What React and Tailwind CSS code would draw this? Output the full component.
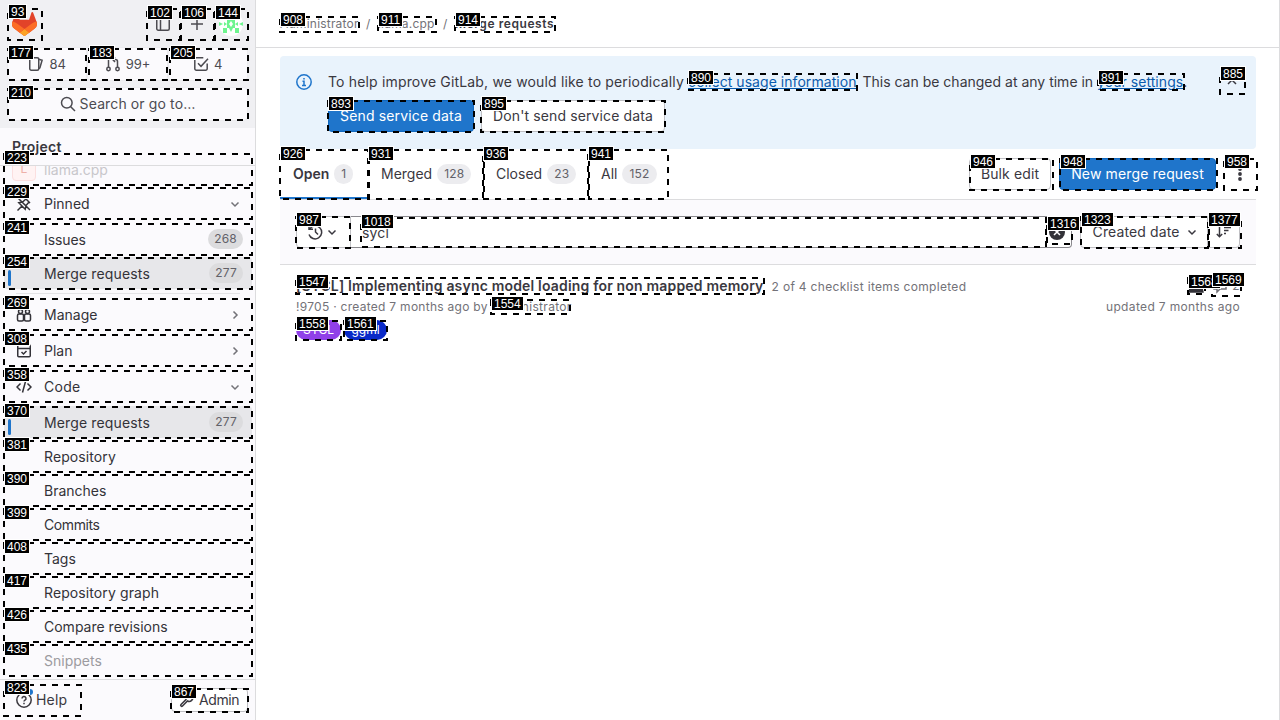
import React from "react";

const MARKS = [
  ["93", 7, 8, 36, 33, 9, 5], ["102", 146, 8, 35, 33, 148, 6], ["106", 180, 8, 35, 33, 182, 6], ["144", 214, 8, 35, 33, 216, 6],
  ["177", 7, 48, 80, 33], ["183", 88, 48, 80, 33, 90, 46], ["205", 169, 48, 80, 33, 171, 46], ["210", 7, 88, 242, 33],
  ["223", 3, 153, 250, 33, 5, 151], ["229", 3, 187, 250, 33, 5, 185], ["241", 3, 223, 250, 33, 5, 221], ["254", 3, 257, 250, 33, 5, 255],
  ["269", 3, 298, 250, 33], ["308", 3, 334, 250, 33], ["358", 3, 370, 250, 33], ["370", 3, 406, 250, 33],
  ["381", 3, 440, 250, 33], ["390", 3, 474, 250, 33], ["399", 3, 508, 250, 33], ["408", 3, 542, 250, 33],
  ["417", 3, 576, 250, 33], ["426", 3, 610, 250, 33], ["435", 3, 644, 250, 33],
  ["823", 3, 684, 79, 33, 5, 681], ["867", 170, 688, 79, 25, 172, 685],
  ["908", 279, 16, 81, 17, 281, 13], ["911", 377, 16, 60, 17, 379, 13], ["914", 454, 16, 102, 17, 456, 13],
  ["890", 687, 73, 171, 18, 689, 71], ["891", 1097, 73, 88, 18, 1099, 71], ["885", 1219, 70, 27, 25, 1221, 67],
  ["893", 327, 100, 148, 33, 329, 97], ["895", 480, 100, 186, 33, 482, 97],
  ["926", 279, 149, 90, 51, 281, 147], ["931", 368, 149, 116, 51, 369, 147], ["936", 483, 149, 106, 51, 484, 147], ["941", 588, 149, 81, 51, 589, 147],
  ["946", 969, 158, 85, 33, 971, 155], ["948", 1059, 158, 159, 33, 1061, 155], ["958", 1223, 158, 35, 33, 1225, 155],
  ["987", 295, 216, 56, 33, 297, 213], ["1018", 360, 217, 687, 31, 362, 215], ["1316", 1046, 222, 27, 23, 1048, 217],
  ["1323", 1080, 216, 129, 33, 1082, 213], ["1377", 1208, 216, 34, 33, 1209, 213],
  ["1547", 295, 277, 470, 18, 297, 275], ["1554", 490, 299, 81, 16, 492, 297],
  ["1558", 295, 320, 47, 21, 297, 317], ["1561", 343, 320, 45, 21, 345, 317],
  ["1568", 1187, 277, 19, 18, 1189, 275], ["1569", 1211, 277, 31, 20, 1213, 273],
];

function Marks() {
  return (
    <div className="pointer-events-none absolute inset-0 overflow-hidden">
      {MARKS.map(([id, x, y, w, h]) => (
        <svg key={id} className="absolute" style={{ left: x, top: y }} width={w} height={h} fill="none" stroke="#000" strokeWidth="2">
          <rect x="1" y="1" width={w - 2} height={h - 2} strokeDasharray="6 6" />
        </svg>
      ))}
      {MARKS.map(([id, x, y, w, h, lx = x + 2, ly = y - 2]) => (
        <span
          key={id}
          style={{ left: lx, top: ly }}
          className="absolute flex h-[13px] items-center bg-black px-[2px] text-[12px] leading-none tracking-[0px] text-white outline outline-white [font-family:'Liberation_Sans',sans-serif]"
        >
          {id}
        </span>
      ))}
    </div>
  );
}

function Icon({ children, className = "" }) {
  return (
    <svg viewBox="0 0 16 16" width="16" height="16" fill="none" stroke="currentColor" strokeWidth="1.5" className={"shrink-0 " + className}>
      {children}
    </svg>
  );
}

const ChevronDown = ({ className }) => <Icon className={className}><path d="m4.500 6.500 3.500 3.500 3.500-3.500" /></Icon>;
const ChevronRight = ({ className }) => <Icon className={className}><path d="m6.500 4.500 3.500 3.500-3.500 3.500" /></Icon>;

function Badge({ children, className = "px-[6px]" }) {
  return (
    <span className={"flex h-5 items-center rounded-full text-[12px] tracking-[0.2px] text-[#626168] " + className}>{children}</span>
  );
}

function NavRow({ label, icon, count, chevron, active, className = "", labelClass = "" }) {
  return (
    <div className={"flex h-8 shrink-0 items-center rounded pr-[9px] pl-3 " + (active ? "bg-[#e7e7ea] " : "") + className}>
      <span className="flex w-7 items-center pt-px">
        {active ? <i className="-ml-2 mt-2 h-4 w-[3px] rounded bg-[#1f75cb]" /> : icon}
      </span>
      <span className={"grow pt-[2px] " + labelClass}>{label}</span>
      {count && <Badge className="bg-[#dcdcde] px-[6px]">{count}</Badge>}
      {chevron === "down" && <ChevronDown className="mt-px text-[#737278]" />}
      {chevron === "right" && <ChevronRight className="mt-px text-[#737278]" />}
    </div>
  );
}

function GitLabLogo() {
  return (
    <svg width="25" height="24" viewBox="0 0 25 24" className="shrink-0">
      <path d="m24.507 9.5-.034-.09L21.082.562a.896.896 0 0 0-1.694.091l-2.29 7.01H7.825L5.535.653a.898.898 0 0 0-1.694-.09L.451 9.411.416 9.5a6.297 6.297 0 0 0 2.09 7.278l.012.01.03.022 5.16 3.867 2.56 1.935 1.554 1.176a1.051 1.051 0 0 0 1.268 0l1.555-1.176 2.56-1.935 5.197-3.89.014-.01A6.297 6.297 0 0 0 24.507 9.5Z" fill="#E24329" />
      <path d="m24.507 9.5-.034-.09a11.44 11.44 0 0 0-4.56 2.051l-7.447 5.632 4.742 3.584 5.197-3.89.014-.01A6.297 6.297 0 0 0 24.507 9.5Z" fill="#FC6D26" />
      <path d="m7.707 20.677 2.56 1.935 1.555 1.176a1.051 1.051 0 0 0 1.268 0l1.555-1.176 2.56-1.935-4.743-3.584-4.755 3.584Z" fill="#FCA326" />
      <path d="M5.01 11.461a11.43 11.43 0 0 0-4.56-2.05L.416 9.5a6.297 6.297 0 0 0 2.09 7.278l.012.01.03.022 5.16 3.867 4.745-3.584-7.444-5.632Z" fill="#FC6D26" />
    </svg>
  );
}

function Avatar() {
  return (
    <svg width="24" height="24" viewBox="0 0 24 24" className="rounded-full bg-white" fill="#6ef58f">
      <path d="M8 8h8v8H8zM4 8h4V4zM20 8h-4V4zM4 16h4v5H4zM20 16h-4v5h4zM0 10l4 2-4 2zM24 10l-4 2 4 2zM10 16h4l-2 4zM5 10l3 2-3 2zM19 10l-3 2 3 2z" />
      <path d="m12 9 2 3-2 3-2-3z" fill="#fff" />
    </svg>
  );
}

const STAT = "flex h-8 w-[79px] items-center justify-center gap-[5px] rounded bg-[#fbfafd] text-[13px] text-[#4c4b51] shadow-[0_0_0_1px_#ececef]";

function Sidebar() {
  return (
    <aside className="flex h-full w-64 shrink-0 flex-col border-r border-[#dcdcde] bg-[#fbfafd]">
      <div className="h-32 shrink-0 bg-[#f0f0f3] px-2 pt-2 text-[#4c4b51]">
        <div className="flex h-8 items-center">
          <div className="flex grow pl-1"><GitLabLogo /></div>
          <div className="flex w-[34px] justify-center pl-px"><Icon><rect x="1.75" y="1.75" width="12.500" height="12.500" rx="1.500" /><path d="M5.500 2v12" /></Icon></div>
          <div className="flex w-[34px] justify-center pl-px"><Icon><path d="M8 2v12M2 8h12" /></Icon></div>
          <div className="flex w-[34px] justify-center pl-px"><Avatar /></div>
        </div>
        <div className="mt-2 flex gap-[2px]">
          <div className={STAT}><Icon><rect x="1.75" y="1.75" width="9" height="12.500" rx="1.500" /><path d="m10.800 3.200 3.300 1-2.200 7.600-1 1" /></Icon>84</div>
          <div className={STAT}>
            <Icon><circle cx="3.500" cy="13" r="1.700" /><circle cx="12.500" cy="13" r="1.700" /><path d="M3.500 11V3M1.500 2h4M12.500 11V5.500a2 2 0 0 0-2-2H8M10 1 7.700 3.500 10 6" /></Icon>99+
          </div>
          <div className={STAT}><Icon><path d="M14.200 7.500v5.200a1.500 1.500 0 0 1-1.500 1.500H3.300a1.500 1.500 0 0 1-1.500-1.500V3.300a1.500 1.500 0 0 1 1.500-1.500h7M5 7.300l3 3 7-7.500" /></Icon>4</div>
        </div>
        <div className="mt-2 flex h-8 items-center justify-center gap-1 rounded bg-[#fbfafd] shadow-[0_0_0_1px_#ececef]">
          <Icon><circle cx="6.800" cy="6.800" r="5.300" /><path d="m10.500 10.500 4.500 4.500" /></Icon>
          <span className="tracking-[0.12px]">Search or go to…</span>
        </div>
      </div>
      <div className="flex h-[38px] shrink-0 items-center border-b border-[#dcdcde] pl-3 font-semibold tracking-[0.25px] text-[#3a383f]">Project</div>
      <nav className="flex min-h-0 grow flex-col overflow-hidden pr-[3px] pl-1 text-[#333238]">
        <div className="flex h-[21px] shrink-0 items-start pl-2">
          <span className="-mt-[9px] flex h-6 w-6 items-center justify-center rounded border border-[#fbdfdf] bg-[#fff3f3] text-[12px] text-[#eeb0a8]">L</span>
          <span className="-mt-[6px] ml-2 text-[#c8c7cb]">llama.cpp</span>
        </div>
        <NavRow label="Pinned" chevron="down" icon={<Icon><path d="m9 2 5 5M10 3 6.500 6 2.800 6.800l6.400 6.400.8-3.700L13 6M6 10l-4.500 4.500M2 2l12 12" /></Icon>} />
        <NavRow className="mt-1" label="Issues" count="268" labelClass="-tracking-[0.1px]" />
        <NavRow className="mt-[2px]" label="Merge requests" count="277" active labelClass="tracking-[0.14px]" />
        <div className="mx-3 mt-1 h-px shrink-0 bg-[#e4e4e7]" />
        <NavRow className="mt-1" label="Manage" chevron="right" icon={<Icon><rect x="1.500" y="7" width="6" height="7" rx="1.500" /><rect x="8.500" y="7" width="6" height="7" rx="1.500" /><circle cx="4.500" cy="4.500" r="2" /><circle cx="11.500" cy="4.500" r="2" /></Icon>} />
        <NavRow className="mt-1" label="Plan" chevron="right" icon={<Icon><rect x="1.750" y="2" width="12.500" height="11.800" rx="1" /><path d="M2 5.500h12M5.500 9l2 2 3-3" /></Icon>} />
        <NavRow className="mt-1" label="Code" chevron="down" labelClass="tracking-[0.3px]" icon={<Icon><path d="M4.500 4.500 1 8l3.500 3.500M11.500 4.500 15 8l-3.500 3.500M9.500 2.500l-3 11" /></Icon>} />
        <div className="mt-1 flex flex-col gap-[2px]">
          <NavRow label="Merge requests" count="277" active labelClass="tracking-[0.14px]" />
          <NavRow label="Repository" labelClass="tracking-[0.1px]" />
          <NavRow label="Branches" />
          <NavRow label="Commits" labelClass="-tracking-[0.4px]" />
          <NavRow label="Tags" />
          <NavRow label="Repository graph" labelClass="tracking-[0.1px]" />
          <NavRow label="Compare revisions" />
          <NavRow label="Snippets" className="text-[#9c9ba0]" />
        </div>
      </nav>
      <div className="flex h-[41px] shrink-0 items-center justify-between border-t border-[#dcdcde] pr-[7px] pl-4 text-[#3a383f]">
        <span className="relative flex items-center gap-1">
          <Icon><circle cx="8" cy="8" r="7.200" /><path d="M6 6.500a2 2 0 1 1 3 1.700c-.7.400-1 .6-1 1.300M8 10.700v1.500" /></Icon>
          <i className="absolute -top-px left-[11px] h-[6px] w-[6px] rounded-full bg-[#1f75cb]" />
          <span className="tracking-[0.2px]">Help</span>
        </span>
        <span className="flex h-6 w-[77px] items-center gap-1 rounded border border-[#bfbfc3] bg-white pl-[7px]">
          <Icon><path d="m2 12.500 5-5a3.700 3.700 0 0 1 4.800-5L9.800 4.500v1.700h1.700l2-2a3.700 3.700 0 0 1-5 4.800l-5 5a1.050 1.050 0 0 1-1.500-1.500Z" /></Icon>
          <span className="-tracking-[0.4px]">Admin</span>
        </span>
      </div>
    </aside>
  );
}

function Tab({ label, count, active, className }) {
  return (
    <div className={"flex h-[50px] items-center gap-[5px] pl-[13px] " + className + (active ? " font-semibold shadow-[inset_0_-2px_0_#1f75cb]" : "")}>
      {label}
      <Badge className="bg-[#ececef] px-[7px] font-normal">{count}</Badge>
    </div>
  );
}

const BTN = "flex h-8 items-center justify-center rounded border border-[#bfbfc3] bg-white tracking-[0.12px]";
const BTN_BLUE = "flex h-8 items-center justify-center rounded border border-[#1068bf] bg-[#1f75cb] tracking-[0.15px] text-white";
const LINK = "tracking-[0.05px] text-[#0b5cad] underline";

export default function App() {
  return (
    <div className="relative flex h-[720px] w-[1280px] overflow-hidden bg-white text-[14px] leading-5 text-[#3a383f] [font-family:Inter,sans-serif]">
      <Sidebar />
      <main className="min-w-0 grow border-r border-[#dcdcde]">
        <header className="flex h-12 items-center border-b border-[#dcdcde] pl-6 text-[12px] tracking-[0.2px] text-[#737278]">
          <span className="w-[86px]">Administrator</span>
          <span className="w-3">/</span>
          <span className="w-[65px]">llama.cpp</span>
          <span className="w-3">/</span>
          <span className="font-semibold tracking-[0.57px] text-[#3a383f]">Merge requests</span>
        </header>
        <div className="mt-2 ml-6 w-[976px]">
          <section className="flex h-[93px] rounded bg-[#e9f3fc] pt-4 pl-4">
            <Icon className="mt-[2px] text-[#1f75cb]"><circle cx="8" cy="8" r="7.200" /><path d="M6.500 7.200H8v4.300M6 11.500h4M8 4v1.600" /></Icon>
            <div className="ml-4 grow">
              <p className="whitespace-nowrap">
                <span className="tracking-[0.165px]">To help improve GitLab, we would like to periodically </span>
                <a className={LINK}>collect usage information</a>
                <span className="-ml-[2px]">. This can be changed at any time in </span>
                <a className={LINK}>your settings</a>.
              </p>
              <div className="mt-2 flex gap-[7px]">
                <div className={BTN_BLUE + " w-[146px]"}>Send service data</div>
                <div className={BTN + " w-[184px]"}>Don't send service data</div>
              </div>
            </div>
            <Icon className="mt-[2px] mr-4"><path d="m4 10 4-4 4 4" /></Icon>
          </section>
          <div className="flex h-[51px] items-start border-b border-[#dcdcde]">
            <Tab label="Open" count="1" active className="w-[88px]" />
            <Tab label="Merged" count="128" className="w-[115px]" />
            <Tab label="Closed" count="23" className="w-[105px]" />
            <Tab label="All" count="152" className="grow" />
            <div className="mt-[9px] flex gap-2">
              <div className={BTN + " w-[82px]"}>Bulk edit</div>
              <div className={BTN_BLUE + " w-[157px]"}>New merge request</div>
              <div className="flex h-8 w-8 items-center justify-center"><Icon><g fill="currentColor" stroke="none"><circle cx="8" cy="3" r="1.900" /><circle cx="8" cy="8" r="1.900" /><circle cx="8" cy="13" r="1.900" /></g></Icon></div>
            </div>
          </div>
          <div className="flex h-[65px] items-start border-b border-[#dcdcde] bg-[#fbfafd] px-4 pt-4">
            <div className="flex h-8 w-[55px] items-center justify-center gap-px rounded-l border border-[#bfbfc3] bg-white pl-px">
              <Icon><path d="M2.700 4.800A6.500 6.500 0 1 1 2 10.500M2 1.500v3.700h4M8.500 4.500V8l2.500 2.500" /></Icon>
              <ChevronDown />
            </div>
            <div className="flex h-8 w-[722px] items-center justify-between rounded-r border border-l-0 border-[#89888d] bg-white pr-[6px] pl-[11px]">
              <span className="pt-[2px] tracking-[0.2px]">sycl</span>
              <svg width="16" height="16" viewBox="0 0 16 16"><circle cx="8" cy="8" r="8" fill="#333238" /><path d="m5 5 6 6M11 5l-6 6" stroke="#fff" strokeWidth="1.500" /></svg>
            </div>
            <div className={BTN + " ml-2 w-[128px] gap-1 rounded-r-none"}>Created date<ChevronDown className="-mr-1" /></div>
            <div className={BTN + " -ml-px w-[33px] rounded-l-none"}><Icon><path d="M3.500 2.500v10M.8 10l2.700 2.700L6.200 10M8 3.500h7M8 6.500h4.500M8 9.500h2" /></Icon></div>
          </div>
          <article className="px-4 pt-[11px] text-[12px] tracking-[0.32px] text-[#737278]">
            <div className="flex h-5 items-center">
              <span className="text-[14px] font-semibold tracking-[0.18px] text-[#3a383f]">[SYCL] Implementing async model loading for non mapped memory</span>
              <span className="ml-2 grow pt-px">2 of 4 checklist items completed</span>
              <Icon className="mr-2 text-[#333238]"><path fill="currentColor" d="M1 14c0-8 14-8 14 0Z" /><circle cx="8" cy="4" r="2.500" /></Icon>
              <Icon className="mr-1"><path d="M2 2h12v9H8l-3 3v-3H2Z" /></Icon>2
            </div>
            <div className="mt-[2px] flex justify-between leading-[18px]">
              <span><span className="tracking-[0.28px]">!9705 · created 7 months ago by </span>Administrator</span>
              <span className="tracking-[0.35px]">updated 7 months ago</span>
            </div>
            <div className="mt-1 flex gap-[3px] tracking-normal text-white">
              <span className="flex h-5 w-[45px] items-center justify-center rounded-full bg-[#9040e8]">SYCL</span>
              <span className="flex h-5 w-[43px] items-center justify-center rounded-full bg-[#0a2ac8]">ggml</span>
            </div>
          </article>
        </div>
      </main>
      <Marks />
    </div>
  );
}
